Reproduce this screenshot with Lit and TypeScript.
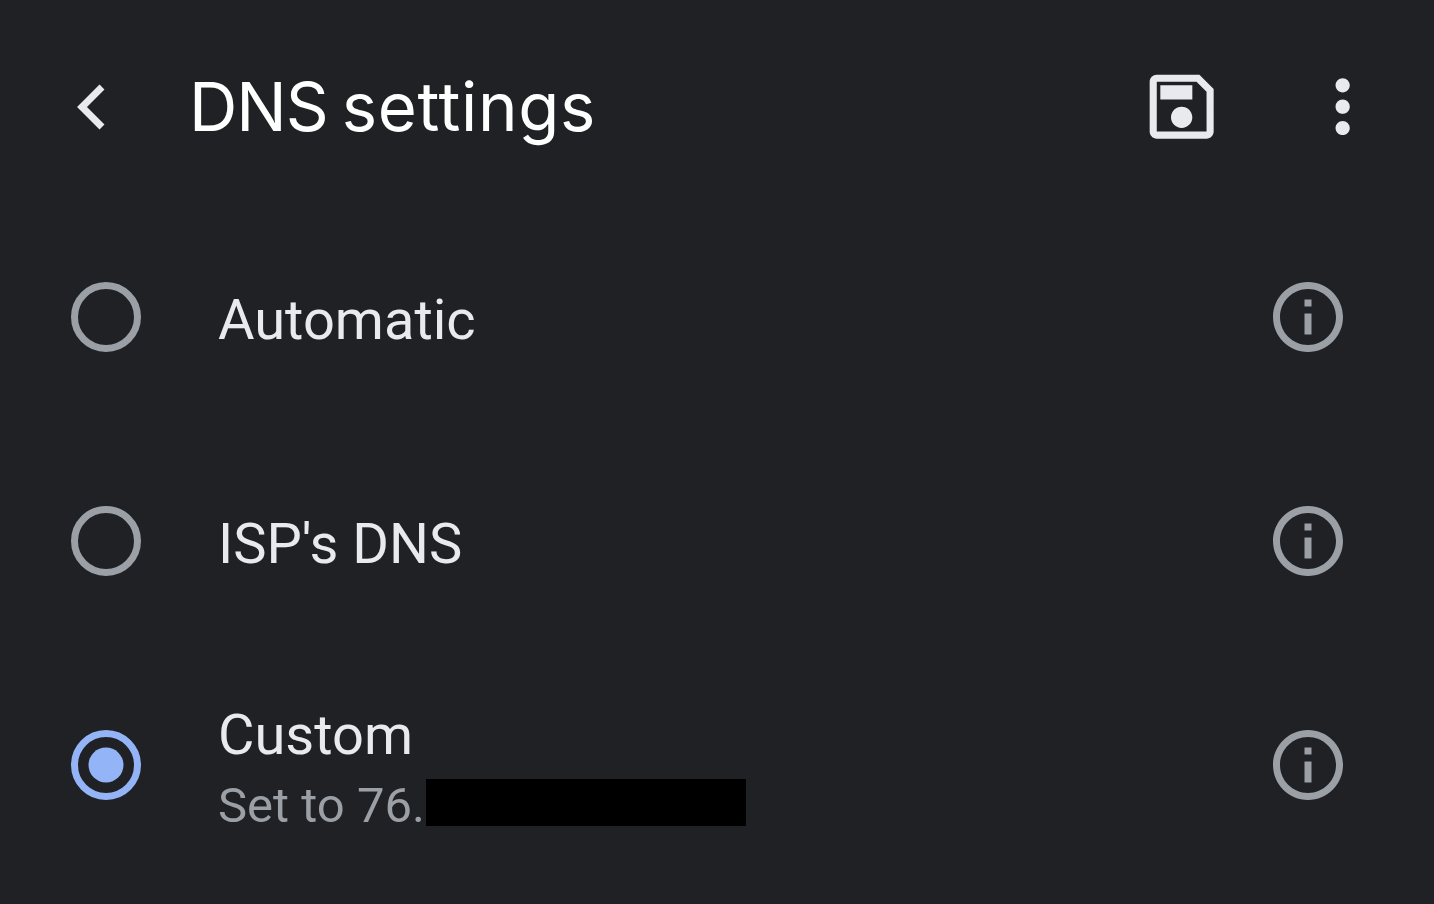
import {LitElement, html, css, svg} from 'lit';
import {customElement} from 'lit/decorators.js';

const SAVE = 'M17 3H5c-1.11 0-2 .9-2 2v14c0 1.1.89 2 2 2h14c1.1 0 2-.9 2-2V7l-4-4zm2 16H5V5h11.17L19 7.83V19zm-7-7c-1.66 0-3 1.34-3 3s1.34 3 3 3 3-1.34 3-3-1.34-3-3-3zM6 6h9v4H6z';
const MORE = 'M12 8c1.1 0 2-.9 2-2s-.9-2-2-2-2 .9-2 2 .9 2 2 2zm0 2c-1.1 0-2 .9-2 2s.9 2 2 2 2-.9 2-2-.9-2-2-2zm0 6c-1.1 0-2 .9-2 2s.9 2 2 2 2-.9 2-2-.9-2-2-2z';
const INFO = 'M11 7h2v2h-2zm0 4h2v6h-2zm1-9C6.48 2 2 6.48 2 12s4.48 10 10 10 10-4.48 10-10S17.52 2 12 2zm0 18c-4.41 0-8-3.59-8-8s3.59-8 8-8 8 3.59 8 8-3.59 8-8 8z';

const icon = (d: string, cls: string) => html`
  <svg class=${cls} viewBox="0 0 24 24" fill="currentColor">${svg`<path d=${d}></path>`}</svg>`;

@customElement('app-root')
export class AppRoot extends LitElement {
  static styles = css`
    :host {
      display: block;
      height: 904px;
      overflow: hidden;
      background: #202124;
      font-family: Roboto, "Liberation Sans", sans-serif;
    }
    .bar {
      display: flex;
      align-items: center;
      height: 196px;
      padding: 9px 49px 0 60px;
      color: #e8eaed;
    }
    .back {
      width: 64px;
      height: 64px;
      flex: none;
    }
    .title {
      flex: 1;
      margin-left: 65px;
      font-family: Inter, Roboto, sans-serif;
      font-size: 67px;
      font-weight: 400;
      letter-spacing: -1px;
      word-spacing: -4px;
      line-height: 80px;
      color: #fff;
    }
    .title-end {
      letter-spacing: 0.7px;
    }
    .tool {
      width: 85.33px;
      height: 85.33px;
      flex: none;
    }
    .tool + .tool {
      margin-left: 75px;
    }
    .row {
      display: flex;
      align-items: center;
      height: 224px;
      padding: 0 84px 0 64px;
    }
    .radio {
      width: 84px;
      height: 84px;
      flex: none;
      color: #9aa0a6;
    }
    .radio.on {
      color: #94b4f8;
    }
    .text {
      flex: 1;
      margin-left: 70px;
      padding-top: 6px;
    }
    .label {
      font-size: 56px;
      line-height: 70px;
      color: #e8eaed;
    }
    .sub {
      margin-top: 6px;
      font-size: 49px;
      line-height: 60px;
      color: #9aa0a6;
    }
    .mask {
      display: inline-block;
      width: 320px;
      height: 47px;
      margin-left: 1px;
      vertical-align: -4px;
      background: #000;
    }
    .info {
      width: 84px;
      height: 84px;
      flex: none;
      color: #9aa0a6;
    }
  `;

  private radio(on: boolean) {
    return html`
      <svg class="radio ${on ? 'on' : ''}" viewBox="0 0 24 24" fill="none" stroke="currentColor">
        <circle cx="12" cy="12" r="9" stroke-width="2"></circle>
        ${on ? svg`<circle cx="12" cy="12" r="5" fill="currentColor" stroke="none"></circle>` : ''}
      </svg>`;
  }

  private row(label: string, on: boolean, sub?: unknown) {
    return html`
      <div class="row">
        ${this.radio(on)}
        <div class="text">
          <div class="label">${label}</div>
          ${sub ? html`<div class="sub">${sub}</div>` : ''}
        </div>
        ${icon(INFO, 'info')}
      </div>`;
  }

  render() {
    return html`
      <div class="bar">
        <svg class="back" viewBox="0 0 64 64" fill="none" stroke="currentColor" stroke-width="7">
          <path d="M42 15L22 35 42 55" transform="translate(0 -3)"></path>
        </svg>
        <div class="title">DNS <span class="title-end">settings</span></div>
        ${icon(SAVE, 'tool')}
        ${icon(MORE, 'tool')}
      </div>
      ${this.row('Automatic', false)}
      ${this.row("ISP's DNS", false)}
      ${this.row('Custom', true, html`Set to 76.<span class="mask"></span>`)}
    `;
  }
}
